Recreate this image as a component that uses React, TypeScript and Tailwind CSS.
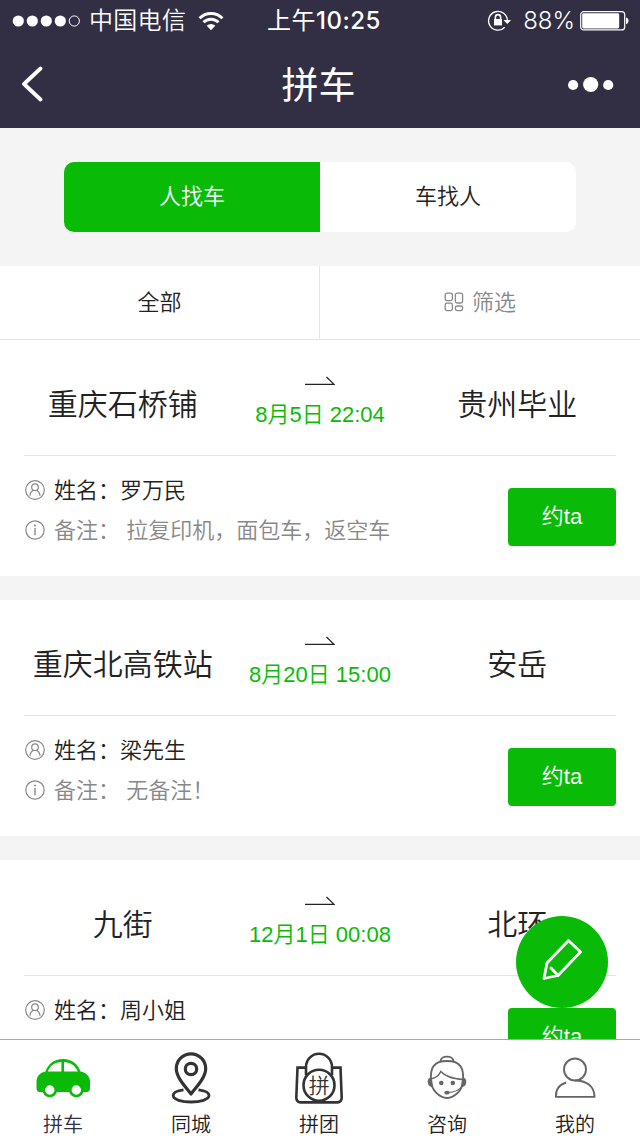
import React from 'react';

interface Ride {
  id: number;
  from: string;
  to: string;
  time: string;
  name: string;
  note?: string;
}

const rides: Ride[] = [
  { id: 1, from: '重庆石桥铺', to: '贵州毕业', time: '8月5日 22:04', name: '罗万民', note: '拉复印机，面包车，返空车' },
  { id: 2, from: '重庆北高铁站', to: '安岳', time: '8月20日 15:00', name: '梁先生', note: '无备注！' },
  { id: 3, from: '九街', to: '北环', time: '12月1日 00:08', name: '周小姐' },
];

const StatusBar: React.FC = () => (
  <div className="flex h-10 items-center pt-[2px] pr-[11px] pl-3 font-['Inter','Noto_Sans_CJK_SC',sans-serif] text-2xl text-white">
    <div className="flex flex-1 items-center">
      <svg width="68" height="12" viewBox="0 0 68 12" fill="#fff">
        <circle cx="6.3" cy="6" r="5.6" />
        <circle cx="20.3" cy="6" r="5.6" />
        <circle cx="34.3" cy="6" r="5.6" />
        <circle cx="48.3" cy="6" r="5.6" />
        <circle cx="62.3" cy="6" r="5.1" fill="none" stroke="#fff" />
      </svg>
      <span className="ml-[9px] font-[350] tracking-[0.3px]">中国电信</span>
      <svg className="ml-3" width="26" height="20" viewBox="0 0 26 20" fill="none" stroke="#fff" strokeWidth="3">
        <path d="M1.6 7.2a16.2 16.2 0 0 1 22.8 0" />
        <path d="M5.5 11.2a10.7 10.7 0 0 1 15 0" />
        <path d="M13 19.2l-4.3-4.4a6.2 6.2 0 0 1 8.6 0z" fill="#fff" stroke="none" />
      </svg>
    </div>
    <span className="pl-[7px] font-normal tracking-[0.5px]">
      上午<span className="font-medium">10:25</span>
    </span>
    <div className="flex flex-1 items-center justify-end">
      <svg width="25" height="22" viewBox="0 0 25 22" fill="none" stroke="#fff" strokeWidth="1.3">
        <path d="M20.4 10.8A9.4 9.4 0 1 0 17.8 17.3" />
        <path d="M16.5 10h7.6l-3.8 4z" fill="#fff" stroke="none" />
        <rect x="7" y="9" width="8" height="6.4" fill="#fff" stroke="none" />
        <path d="M8.4 9V7.2a2.6 2.6 0 0 1 5.2 0V9" strokeWidth="1.6" />
      </svg>
      <span className="ml-[11px] font-[350]">88%</span>
      <svg className="ml-[5px]" width="49" height="20" viewBox="0 0 49 20">
        <rect x="0.7" y="0.7" width="44" height="18.2" rx="3" fill="none" stroke="#fff" strokeWidth="1.2" />
        <rect x="2.2" y="2.2" width="37" height="15.2" rx="1.4" fill="#fff" />
        <path d="M46 6.4c3.4.8 3.4 6 0 6.8z" fill="#fff" />
      </svg>
    </div>
  </div>
);

const NavBar: React.FC = () => (
  <div className="flex h-[88px] items-center justify-between pr-[26px] pl-[21px] text-white">
    <svg width="46" height="36" viewBox="0 0 46 36" fill="none" stroke="#fff" strokeWidth="3.8" strokeLinecap="round" strokeLinejoin="round">
      <path d="M19.5 2.5L3 18l16.5 15.5" />
    </svg>
    <h1 className="pt-[6px] pl-[2px] text-[37px] font-normal">拼车</h1>
    <svg width="46" height="18" viewBox="0 0 46 18" fill="#fff">
      <circle cx="5.1" cy="10" r="5.1" />
      <circle cx="22.7" cy="9.5" r="7.6" />
      <circle cx="40.2" cy="10" r="5.1" />
    </svg>
  </div>
);

const ModeSwitch: React.FC = () => (
  <div className="px-16 py-[34px]">
    <div className="grid h-[70px] grid-cols-2 overflow-hidden rounded-[10px] bg-white text-[22px]">
      <button className="bg-[#09bb07] pb-[2px] text-white">人找车</button>
      <button className="pb-[2px]">车找人</button>
    </div>
  </div>
);

const FilterBar: React.FC = () => (
  <div className="grid h-[74px] grid-cols-2 border-b border-[#e5e5e5] bg-white text-[22px]">
    <button className="border-r border-[#e5e5e5]">全部</button>
    <button className="flex items-center justify-center gap-2 text-[#888]">
      <svg className="-mt-[2px]" width="20" height="20" viewBox="0 0 20 20" fill="none" stroke="#888" strokeWidth="1.3">
        <rect x="1.2" y="1.2" width="7.2" height="7.4" rx="1.8" />
        <rect x="11.4" y="1.2" width="7.2" height="9.8" rx="1.8" />
        <rect x="1.2" y="11.2" width="7.2" height="7.4" rx="1.8" />
        <rect x="11.4" y="14" width="7.2" height="4.6" rx="1.8" />
      </svg>
      筛选
    </button>
  </div>
);

const UserIcon: React.FC = () => (
  <svg width="22" height="22" viewBox="0 0 22 22" fill="none" stroke="#888" strokeWidth="1.2">
    <circle cx="11" cy="11" r="9.3" />
    <circle cx="11" cy="8.2" r="3.3" />
    <path d="M6 16.8c.2-3 1.5-4.6 3.4-5.4M16 16.8c-.2-3-1.5-4.6-3.4-5.4" />
  </svg>
);

const InfoIcon: React.FC = () => (
  <svg width="22" height="22" viewBox="0 0 22 22" fill="none" stroke="#888" strokeWidth="1.2">
    <circle cx="11" cy="11" r="9.2" />
    <path d="M11 9v7.2" strokeWidth="1.4" />
    <circle cx="11" cy="6.4" r="1" fill="#888" stroke="none" />
  </svg>
);

const RideCard: React.FC<{ ride: Ride }> = ({ ride }) => (
  <div className="h-[236px] shrink-0 bg-white px-6">
    <div className="grid h-[116px] grid-cols-3 items-center border-b border-[#e5e5e5] text-center">
      <span className="pt-[14px] text-[30px] leading-[42px] whitespace-nowrap">{ride.from}</span>
      <div className="flex flex-col items-center pt-[11px]">
        <svg width="30" height="10" viewBox="0 0 30 10" fill="none" stroke="#222" strokeWidth="1.2">
          <path d="M0 8.4h29L21.5 1" />
        </svg>
        <span className="mt-[13px] text-[22px] leading-[32px] whitespace-nowrap text-[#09bb07]">{ride.time}</span>
      </div>
      <span className="pt-[14px] text-[30px] leading-[42px] whitespace-nowrap">{ride.to}</span>
    </div>
    <div className="flex items-start justify-between">
      <div className="pt-[14px] text-[22px] leading-10">
        <div className="flex h-10 items-center gap-2">
          <UserIcon />
          <span className="pt-[2px]">姓名：{ride.name}</span>
        </div>
        {ride.note && (
          <div className="flex h-10 items-center gap-2 text-[#888]">
            <InfoIcon />
            <span className="pt-[2px]">备注： {ride.note}</span>
          </div>
        )}
      </div>
      <button className="mt-8 h-[58px] w-[108px] rounded bg-[#09bb07] pb-[2px] text-[22px] text-white">约ta</button>
    </div>
  </div>
);

const CarIcon: React.FC = () => (
  <svg width="54" height="54" viewBox="0 0 54 54">
    <path
      d="M4 48C1.500 48 .5 46.500 .5 44V38c0-6 3.500-9.500 9-10.500C12 20 18 15 27 15s15 5 17.500 12.500c5.500 1 9.500 4.500 9.500 10.500v6c0 2.500-1 4-3.500 4z"
      fill="#09bb07"
    />
    <path d="M11.800 27.600c1.800-5.400 6.200-9.200 13.600-9.600v9.600zM28 18c7.400.4 11.800 4.200 13.800 9.600H28z" fill="#fff" />
    <circle cx="13.800" cy="46" r="6" fill="#fff" stroke="#09bb07" strokeWidth="2.600" />
    <circle cx="40.300" cy="46" r="6" fill="#fff" stroke="#09bb07" strokeWidth="2.600" />
  </svg>
);

const PinIcon: React.FC = () => (
  <svg width="54" height="54" viewBox="0 0 54 54" fill="none" stroke="#333" strokeWidth="3.2" strokeLinejoin="round">
    <path d="M27 50C20 41 12.300 33 12.300 24.500a14.700 14.700 0 0 1 29.400 0C41.700 33 34 41 27 50z" />
    <circle cx="27" cy="25" r="5.7" />
    <path d="M19.500 45.800C12 46.600 9.200 48.900 9.200 51.600c0 4 8.500 6.400 17.800 6.400s18-2.400 18-6.400c0-2.700-3-5-10.500-5.800" strokeWidth="2.800" />
  </svg>
);

const BagIcon: React.FC = () => (
  <svg width="54" height="54" viewBox="0 0 54 54" fill="none" stroke="#333" strokeWidth="2.6">
    <path d="M14 23.600H5.500L4.300 53.200c-.1 3 1.500 5.200 4.200 5.200h37c2.700 0 4.300-2.200 4.200-5.200L48.500 23.600H40" />
    <path d="M14 31v-8a13 13.200 0 0 1 26 0v8" />
    <circle cx="27" cy="41.200" r="15.500" fill="#fff" />
    <text x="27.300" y="49" textAnchor="middle" fontSize="21" fill="#333" stroke="none">拼</text>
  </svg>
);

const ServiceIcon: React.FC = () => (
  <svg width="54" height="54" viewBox="0 0 54 54" fill="none" stroke="#666" strokeWidth="1.9">
    <path d="M20.500 17.500c0-6.500 13-6.500 13 0" />
    <path d="M11 36c-1-12.500 3-19 16-19s17 6.500 16 19c0 10.500-9 18-16 18s-16-7.500-16-18z" />
    <path d="M11 35c5-1.200 8-3.500 9.800-7.500 5 5.500 12 7 22.200 8" strokeWidth="1.500" />
    <path d="M11 34.500c-3.200.5-3.200 7 .8 7.500zM43 34.500c3.200.5 3.200 7-.8 7.500z" fill="#666" />
    <circle cx="21.300" cy="39" r="2.300" fill="#666" stroke="none" />
    <circle cx="32.800" cy="39" r="2.300" fill="#666" stroke="none" />
    <path d="M42.500 42c-3 4-8 6.500-15 6.500" strokeWidth="1.200" />
    <ellipse cx="27" cy="48.700" rx="2.700" ry="1.900" fill="#666" stroke="none" />
  </svg>
);

const ProfileIcon: React.FC = () => (
  <svg width="54" height="54" viewBox="0 0 54 54" fill="none" stroke="#666" strokeWidth="1.9">
    <circle cx="27" cy="25.500" r="11" />
    <path d="M18 38.500C11 41 7.500 46 8 52.900h38.500C46.500 42 38 36.500 27 36.500" />
  </svg>
);

const tabs = [
  { label: '拼车', icon: CarIcon, active: true },
  { label: '同城', icon: PinIcon },
  { label: '拼团', icon: BagIcon },
  { label: '咨询', icon: ServiceIcon },
  { label: '我的', icon: ProfileIcon },
];

const TabBar: React.FC = () => (
  <nav className="grid h-[97px] shrink-0 grid-cols-5 border-t border-[#a8a8a8] bg-white">
    {tabs.map(({ label, icon: Icon, active }) => (
      <button key={label} className="flex flex-col items-center pt-1 pr-[2px] [&>svg]:overflow-visible">
        <Icon />
        <span className={active ? 'mt-[13px] text-[20px] leading-7 text-[#322e43]' : 'mt-[13px] text-[20px] leading-7 text-[#222]'}>
          {label}
        </span>
      </button>
    ))}
  </nav>
);

const App: React.FC = () => {
  return (
    <div className="relative flex h-[1136px] w-[640px] flex-col overflow-hidden bg-[#f4f4f4] font-['Liberation_Sans','Noto_Sans_CJK_SC',sans-serif] font-[350] text-[#222]">
      <header className="shrink-0 bg-[#322e43]">
        <StatusBar />
        <NavBar />
      </header>
      <main className="min-h-0 flex-1 overflow-hidden">
        <ModeSwitch />
        <FilterBar />
        <div className="flex flex-col gap-6">
          {rides.map((ride) => (
            <RideCard key={ride.id} ride={ride} />
          ))}
        </div>
      </main>
      <TabBar />

      {/* Floating publish button */}
      <button className="absolute top-[916px] left-[516px] flex h-[92px] w-[92px] items-center justify-center rounded-full bg-[#09bb07]">
        <svg className="-mt-1" width="44" height="44" viewBox="0 0 44 44" fill="none" stroke="#fff" strokeWidth="2.8" strokeLinejoin="round" strokeLinecap="round">
          <path d="M28.5 2.500L40.500 14 18 37.500 4 40.500 7 25z" />
          <path d="M11 30l7 7.500" />
        </svg>
      </button>
    </div>
  );
};

export default App;
